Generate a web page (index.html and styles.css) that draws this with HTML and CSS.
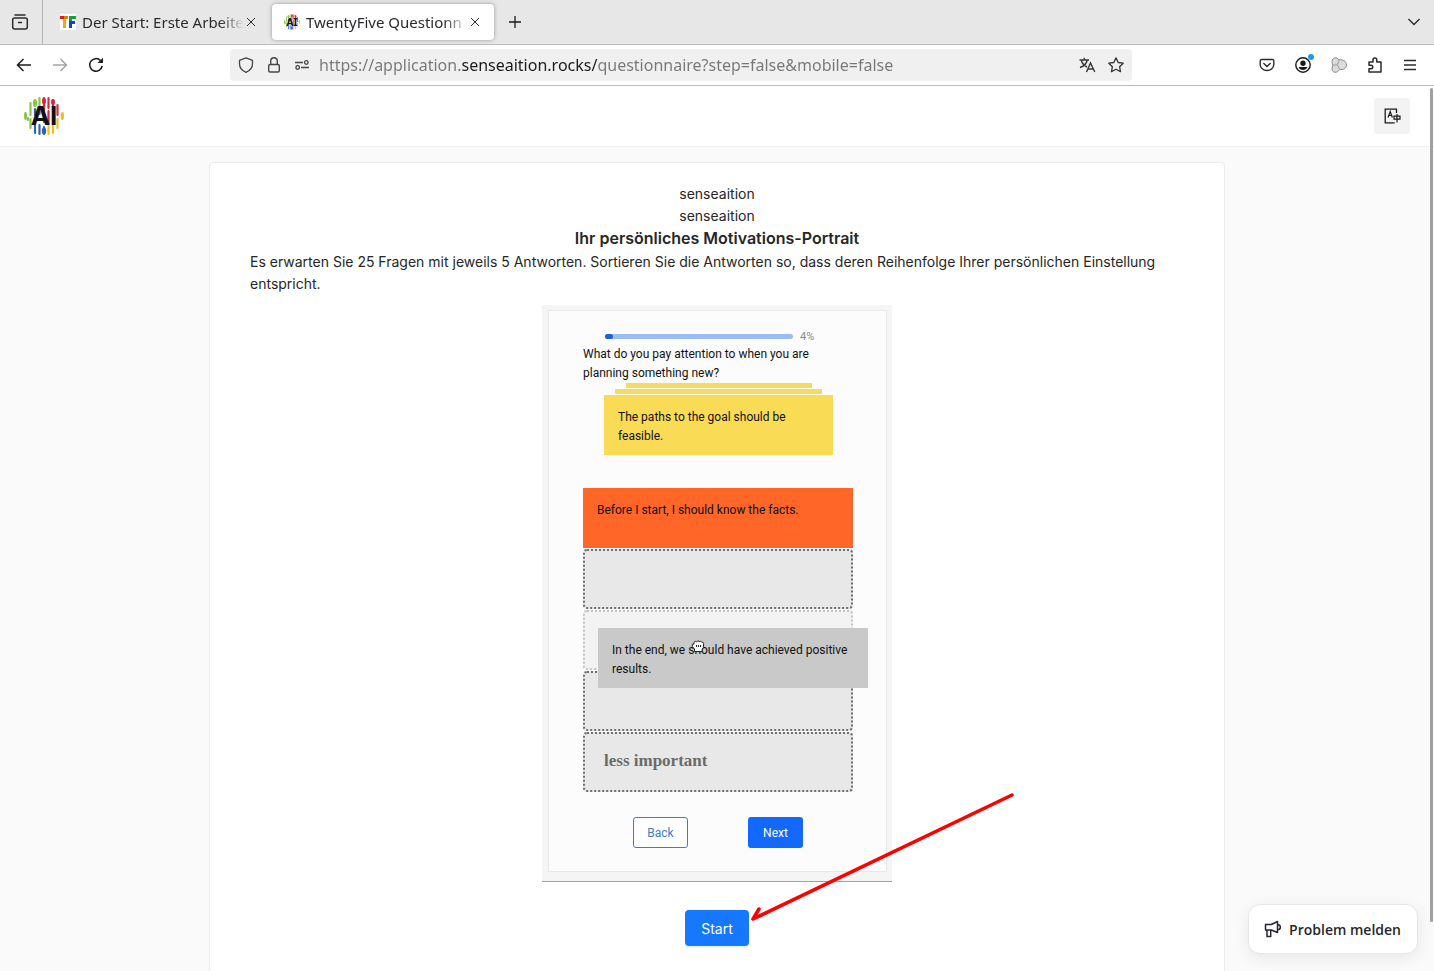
FILE: index.html
```html
<!DOCTYPE html>
<html lang="de">
<head>
<meta charset="UTF-8">
<meta name="viewport" content="width=device-width, initial-scale=1">
<title>TwentyFive Questionnaire</title>
<link rel="stylesheet" href="styles.css">
</head>
<body>

<svg class="defs" width="0" height="0" aria-hidden="true">
  <symbol id="logo" viewBox="0 0 40 40">
    <g fill="none" stroke-width="2.200" stroke-linecap="round">
      <path stroke="#8bc34a" d="M1.500 17v6M6.500 7v12M11 4v6M15.500 2v8M6.500 23v9M4 22v2"/>
      <path stroke="#d6293a" d="M20 2v13M24.500 2v10M29 4v11M24.500 15v13M33.500 9v10"/>
      <path stroke="#2f62b5" d="M11 13v6M11 29v8M15.500 29v9M20 31v7M15.500 12v6M20 18v8"/>
      <path stroke="#f0bd26" d="M24.500 30v8M29 29v8M33.500 23v9M38.500 17v6"/>
    </g>
    <g>
      <ellipse cx="1.500" cy="20" rx="1.500" ry="3" fill="#8bc34a"/>
      <ellipse cx="11" cy="7" rx="2.200" ry="3.500" fill="#8bc34a"/>
      <ellipse cx="20" cy="5" rx="2" ry="3.500" fill="#d6293a"/>
      <ellipse cx="29" cy="6" rx="2" ry="3" fill="#d6293a"/>
      <ellipse cx="20" cy="35" rx="2.200" ry="3.500" fill="#2f62b5"/>
      <ellipse cx="38.300" cy="20" rx="1.700" ry="3.500" fill="#f0bd26"/>
    </g>
  </symbol>
</svg>

<div class="tabbar">
  <button class="recent" aria-label="Letzte Tabs">
    <svg width="18" height="18" viewBox="0 0 18 18" fill="none" stroke="#2b2b2f" stroke-width="1.500" stroke-linecap="round"><path d="M4 2h10"/><rect x="1.700" y="5" width="14.600" height="11" rx="2"/><path d="M7.500 9.500h3"/></svg>
  </button>
  <div class="tab">
    <svg class="favicon" width="16" height="16" viewBox="0 0 16 16"><path fill="#fff" d="M0 0h16v16H0z"/><path fill="#d81e1e" d="M0 2h4v3H0z"/><path fill="#e07a10" d="M4 2h4v3H4z"/><path fill="#e8b000" d="M3 5h3v9H3z"/><path fill="#14a03c" d="M9 2h7v3h-4v3H9z"/><path fill="#1d3fd0" d="M9 7h6v3h-3v4H9z"/></svg>
    <a class="tab-title" href="#">Der Start: Erste Arbeite</a>
    <button class="close" aria-label="Tab schließen"><svg width="10" height="10" viewBox="0 0 10 10" stroke="#2b2b2f"><path d="M1 1l8 8M9 1L1 9"/></svg></button>
  </div>
  <div class="tab active">
    <span class="favicon logo-small"><svg width="16" height="16"><use href="#logo"/></svg><b>AI</b></span>
    <a class="tab-title" href="#">TwentyFive Questionn</a>
    <button class="close" aria-label="Tab schließen"><svg width="10" height="10" viewBox="0 0 10 10" stroke="#2b2b2f"><path d="M1 1l8 8M9 1L1 9"/></svg></button>
  </div>
  <button class="new-tab" aria-label="Neuer Tab"><svg width="12" height="12" viewBox="0 0 12 12" stroke="#1b1b1f" stroke-width="1.300"><path d="M6 0v12M0 6h12"/></svg></button>
  <button class="all-tabs" aria-label="Alle Tabs"><svg width="12" height="8" viewBox="0 0 12 8" fill="none" stroke="#2b2b2f" stroke-width="1.400"><path d="M.5 1L6 6.500 11.500 1"/></svg></button>
</div>

<div class="navbar">
  <div class="nav-buttons">
    <button aria-label="Zurück"><svg width="16" height="16" viewBox="0 0 16 16" fill="none" stroke="#1b1b1f" stroke-width="1.500"><path d="M15 8H2M7.500 2L1.500 8l6 6"/></svg></button>
    <button aria-label="Vor"><svg width="16" height="16" viewBox="0 0 16 16" fill="none" stroke="#a5a5a8" stroke-width="1.500"><path d="M1 8h13M8.500 2l6 6-6 6"/></svg></button>
    <button aria-label="Neu laden"><svg width="16" height="16" viewBox="0 0 16 16"><path d="M14.200 9A6.300 6.300 0 1 1 12.500 3.500" fill="none" stroke="#1b1b1f" stroke-width="1.500"/><path d="M15 .8V6H9.500z" fill="#1b1b1f"/></svg></button>
  </div>
  <div class="urlbar">
    <svg width="16" height="16" viewBox="0 0 16 16" fill="none" stroke="#45454a" stroke-width="1.300" stroke-linejoin="round"><path d="M8 .8l6.500 2.500v3.500c0 4-2.700 7-6.500 8.500C4.200 13.800 1.500 10.800 1.500 6.800V3.300z"/></svg>
    <svg width="16" height="16" viewBox="0 0 16 16" fill="none" stroke="#45454a" stroke-width="1.400"><rect x="2.700" y="7.500" width="10.600" height="7.500" rx="1.500"/><path d="M4.700 7.500V4a3.300 3.300 0 0 1 6.600 0v3.500"/></svg>
    <svg width="16" height="16" viewBox="0 0 16 16" fill="none" stroke="#45454a" stroke-width="1.300"><path d="M1 5.500h8M7 10.500h8"/><circle cx="12.300" cy="5.500" r="1.800"/><circle cx="3.700" cy="10.500" r="1.800"/></svg>
    <input class="url" type="text" aria-label="Adresse" value="https://application.senseaition.rocks/questionnaire?step=false&amp;mobile=false">
    <button aria-label="Seite übersetzen"><svg width="17" height="16" viewBox="0 0 17 16" fill="none" stroke="#35353a" stroke-width="1.400"><path d="M.5 3h9.500M5.200.8V3M8.300 3C7.500 6.500 4.500 9.300 1 10.500M2.300 3c.6 3 3 5.700 5.700 7M7.500 15l4-9 4.300 9M9 12h5.500"/></svg></button>
    <button aria-label="Lesezeichen"><svg width="16" height="16" viewBox="0 0 16 16" fill="none" stroke="#35353a" stroke-width="1.300" stroke-linejoin="round"><path d="M8 .9l2.200 4.600 5 .7-3.600 3.500.9 5L8 12.300l-4.500 2.400.9-5L.8 6.200l5-.7z"/></svg></button>
  </div>
  <div class="nav-tools">
    <button aria-label="Pocket"><svg width="16" height="16" viewBox="0 0 16 16" fill="none" stroke="#2b2b2f" stroke-width="1.400" stroke-linecap="round"><path d="M2.500 2.500h11a1.300 1.300 0 0 1 1.300 1.300V7.500a6.800 6 0 0 1-13.600 0V3.800a1.300 1.300 0 0 1 1.300-1.300zM4.800 6.500L8 9.500l3.200-3"/></svg></button>
    <button class="account" aria-label="Konto"><svg width="16" height="16" viewBox="0 0 16 16"><circle cx="8" cy="8" r="7.200" fill="none" stroke="#1b1b1f" stroke-width="1.400"/><circle cx="8" cy="6.200" r="2.700" fill="#1b1b1f"/><path fill="#1b1b1f" d="M3.500 10h9c-.8 2-2.400 3-4.500 3s-3.700-1-4.500-3z"/></svg><span class="dot"></span></button>
    <button aria-label="Erweiterung"><svg width="16" height="16" viewBox="0 0 16 16" fill="#dcdcdc" stroke="#8a8a8a"><path d="M1 4.500C1 .5 6-.5 8 3c4-1 7.500 1.500 7.500 5S12 13 8.500 12.500C6.500 16.500 1 16 1 12c0-1.500.5-2.500.5-3.700S1 6 1 4.500z"/><path fill="none" stroke="#a5a5a5" stroke-width=".8" d="M8 3C6 6 6.500 9.500 8.500 12.500M1.500 8.300c3-2 6-1 7 4.200M1.500 8.300C4 9.500 8 8 8 3"/></svg></button>
    <button aria-label="Add-ons"><svg width="16" height="16" viewBox="0 0 16 16" fill="none" stroke="#2b2b2f" stroke-width="1.500" stroke-linejoin="round"><path d="M2 5h4V3a1.900 1.900 0 0 1 3.800 0v2H14v10H2v-3.200h2a1.700 1.700 0 0 0 0-3.500H2z"/></svg></button>
    <button aria-label="Menü"><svg width="14" height="12" viewBox="0 0 14 12" stroke="#2b2b2f" stroke-width="1.400"><path d="M1 1.500h12M1 6h12M1 10.500h12"/></svg></button>
  </div>
</div>

<div class="viewport">
  <header class="app-header">
    <a class="logo" href="#" aria-label="senseaition"><svg width="40" height="40"><use href="#logo"/></svg><b>AI</b></a>
    <button class="lang" aria-label="Sprache"><svg width="18" height="18" viewBox="0 0 18 18" fill="none" stroke="#1b1b1f" stroke-width="1.300"><path d="M13.500 6V2.200H2.200v13.600h9.500"/><path d="M5 10.500l2.200-6 2.200 6M5.800 8.500h2.800" stroke-width="1.200"/><path d="M11 9.200h6v3h-6zM14 7v8.500" stroke-width="1.200"/></svg></button>
  </header>

  <main class="card">
    <p>senseaition</p>
    <p>senseaition</p>
    <h1>Ihr persönliches Motivations-Portrait</h1>
    <p class="intro">Es erwarten Sie 25 Fragen mit jeweils 5 Antworten. Sortieren Sie die Antworten so, dass deren Reihenfolge Ihrer persönlichen Einstellung entspricht.</p>

    <div class="demo">
      <div class="demo-inner">
        <div class="progress">
          <div class="bar"><div class="bar-fill" style="width: 4%"></div></div>
          <span>4%</span>
        </div>
        <p class="question">What do you pay attention to when you are planning something new?</p>
        <div class="stack">
          <div class="stack-edge far"></div>
          <div class="stack-edge"></div>
          <div class="answer yellow">The paths to the goal should be feasible.</div>
        </div>
        <div class="slots">
          <div class="answer orange">Before I start, I should know the facts.</div>
          <div class="slot"></div>
          <div class="slot faded"></div>
          <div class="slot"></div>
          <div class="slot last">less important</div>
          <div class="answer dragged">In the end, we should have achieved positive results.
            <svg class="hand" width="14" height="14" viewBox="0 0 14 14" fill="#fff" stroke="#222" stroke-linejoin="round"><path d="M3.500 12.500V10L1.300 7.500V5.300L3 5V3.300l1.500-1 1 .7 1.300-1.300 1.400.9 1.500-.4 1 1 1.400.2.600 1.300-.4 3.800-1.200 2v2z"/><path d="M5.500 6v2M7.500 6v2M9.500 6v2"/></svg>
          </div>
        </div>
        <div class="demo-buttons">
          <button class="btn-outline">Back</button>
          <button class="btn-next">Next</button>
        </div>
      </div>
    </div>

    <div class="start-wrap">
      <button class="btn-start">Start</button>
      <svg class="arrow" width="266" height="130" viewBox="0 0 266 130" fill="none" stroke="#f00" stroke-width="3.500" stroke-linecap="round" stroke-linejoin="round"><path d="M263 3L4 127M4 127L10 117M4 127l9-4"/></svg>
    </div>
  </main>

  <button class="report"><svg width="18" height="18" viewBox="0 0 18 18" fill="none" stroke="#26262e" stroke-width="1.500" stroke-linejoin="round"><path d="M1.500 4.500h5.800L13.500 1.500v11L7.300 10H1.500zM3 10h3.700v6.500H3zM13.500 4.500c3.800.3 3.800 5 0 5.300"/></svg>Problem melden</button>
  <div class="scrollbar"></div>
</div>

</body>
</html>
```
FILE: styles.css
```css
* {
  box-sizing: border-box;
}

body {
  margin: 0;
  height: 100vh;
  display: flex;
  flex-direction: column;
  overflow: hidden;
  font-family: Inter, "Liberation Sans", sans-serif;
  font-size: 14px;
  line-height: 22px;
  color: #262626;
  background: #fafafa;
}

button {
  padding: 0;
  border: none;
  background: none;
  font-family: inherit;
  cursor: pointer;
}

svg {
  display: block;
  flex: none;
}

p, h1 {
  margin: 0;
}

.defs {
  position: absolute;
}

/* browser tabs */
.tabbar {
  flex: none;
  display: flex;
  align-items: center;
  height: 45px;
  padding-right: 14px;
  background: #e7e7e7;
  border-bottom: 1px solid #bdbdbd;
  font-family: "Noto Sans", sans-serif;
}

.recent {
  display: flex;
  align-items: center;
  justify-content: center;
  width: 43px;
  height: 44px;
  padding-right: 2px;
  margin-right: 5px;
  border-right: 1px solid #b5b5b5;
}

.tab {
  display: flex;
  align-items: center;
  width: 222px;
  height: 36px;
  padding: 0 10px 0 12px;
  border-radius: 4px;
}

.tab.active {
  margin-left: 2px;
  background: #fff;
  box-shadow: 0 0 4px rgba(0, 0, 0, 0.35);
}

.favicon {
  margin-right: 6px;
}

.tab-title {
  flex: 1;
  overflow: hidden;
  white-space: nowrap;
  font-size: 15px;
  color: #2b2b2f;
  text-decoration: none;
  -webkit-mask-image: linear-gradient(to left, transparent, #000 24px);
  mask-image: linear-gradient(to left, transparent, #000 24px);
}

.close {
  margin: 0 4px 0 2px;
}

.new-tab {
  margin-left: 15px;
}

.all-tabs {
  margin-left: auto;
}

/* address bar */
.navbar {
  flex: none;
  display: grid;
  grid-template-columns: 1fr 902px 1fr;
  align-items: center;
  height: 41px;
  background: #fff;
  border-bottom: 1px solid #bdbdbd;
}

.nav-buttons {
  display: flex;
  gap: 20px;
  padding-left: 16px;
}

.urlbar {
  display: flex;
  align-items: center;
  gap: 12px;
  height: 32px;
  margin-left: -36px;
  margin-right: 36px;
  padding: 0 8px;
  border-radius: 4px;
  background: #f0f0f0;
}

/* the host part of the address is darker than the rest */
.url {
  flex: 1;
  min-width: 0;
  margin-left: -3px;
  padding: 0;
  border: none;
  outline: none;
  font-family: "Noto Sans", sans-serif;
  font-size: 16px;
  color: #77777a;
  background: linear-gradient(to right, #77777a 143px, #1b1b1f 143px, #1b1b1f 279px, #77777a 279px);
  -webkit-background-clip: text;
  background-clip: text;
  -webkit-text-fill-color: transparent;
}

.nav-tools {
  display: flex;
  align-items: center;
  justify-content: flex-end;
  gap: 20px;
  padding-right: 17px;
}

.account {
  position: relative;
}

.dot {
  position: absolute;
  top: -3px;
  right: -3px;
  width: 6px;
  height: 6px;
  border-radius: 50%;
  background: #1a9cf0;
}

/* page */
.viewport {
  flex: 1;
  min-height: 0;
  position: relative;
  overflow: hidden;
}

.app-header {
  display: flex;
  align-items: center;
  justify-content: space-between;
  height: 61px;
  padding: 0 24px;
  background: #fff;
  border-bottom: 1px solid #f0f0f0;
}

.logo, .logo-small {
  position: relative;
  color: #111;
}

.logo b, .logo-small b {
  position: absolute;
  inset: 0;
  font-size: 26px;
  font-weight: 700;
  line-height: 40px;
  text-align: center;
}

.logo-small b {
  font-size: 10px;
  line-height: 16px;
}

.lang {
  display: flex;
  align-items: center;
  justify-content: center;
  width: 36px;
  height: 36px;
  border-radius: 4px;
  background: #f3f3f3;
}

.card {
  display: flex;
  flex-direction: column;
  align-items: center;
  max-width: 1016px;
  margin: 15px auto 0;
  padding: 20px 40px 40px;
  background: #fff;
  border: 1px solid #ebebeb;
  border-radius: 4px;
}

h1 {
  margin-bottom: 2px;
  font-size: 16px;
  font-weight: 600;
  line-height: 22px;
}

.intro {
  align-self: stretch;
}

/* demo of the sorting task */
.demo {
  width: 350px;
  margin-top: 10px;
  padding: 5px 5px 9px 6px;
  background: #f5f5f5;
  border-bottom: 1px solid #a0a0a0;
  font-family: Roboto, "Liberation Sans", sans-serif;
  font-size: 12px;
  line-height: 19px;
  color: #111;
}

.demo-inner {
  padding: 17px 33px 23px 34px;
  background: #fcfcfc;
  border: 1px solid #e8e8e8;
}

.progress {
  display: flex;
  align-items: center;
  gap: 7px;
  padding-left: 22px;
  font-size: 11px;
  line-height: 17px;
  color: #888;
}

.bar {
  width: 188px;
  height: 5px;
  border-radius: 3px;
  background: #98bdf7;
}

.bar-fill {
  height: 5px;
  border-radius: 3px;
  background: #1c5fe0;
}

.stack {
  display: flex;
  flex-direction: column;
  align-items: center;
  gap: 1px;
  margin: 0 20px 33px 21px;
}

.stack-edge {
  width: 207px;
  height: 5px;
  background: #f4db62;
}

.stack-edge.far {
  width: 186px;
}

.answer {
  width: 100%;
  height: 60px;
  padding: 13px 8px 13px 14px;
  color: #111;
}

.yellow {
  background: #fadb55;
}

.orange {
  background: #ff6628;
}

.slots {
  position: relative;
  display: flex;
  flex-direction: column;
  gap: 1px;
}

.slot {
  height: 60px;
  border: 2px dotted #707070;
  border-radius: 4px;
  background: #e8e8e8;
}

.slot.faded {
  border-color: #c4c4c4;
  background: #f3f3f3;
}

.slot.last {
  padding: 17px 19px;
  font-family: "Liberation Serif", serif;
  font-size: 17px;
  font-weight: 700;
  color: #6b6b6b;
}

.dragged {
  position: absolute;
  left: 15px;
  top: 140px;
  background: #c9c9c9;
}

.hand {
  position: absolute;
  left: 93px;
  top: 11px;
}

.demo-buttons {
  display: flex;
  justify-content: center;
  gap: 60px;
  margin-top: 25px;
}

.demo-buttons button {
  width: 55px;
  height: 31px;
  border-radius: 3px;
  font-size: 12px;
}

.btn-outline {
  border: 1px solid #3d7cc9;
  background: #fff;
  color: #3d7cc9;
}

.demo-buttons .btn-next {
  background: #1268ff;
  color: #fff;
}

.start-wrap {
  position: relative;
  margin-top: 28px;
}

.btn-start {
  display: block;
  width: 64px;
  height: 36px;
  border-radius: 4px;
  background: #1677ff;
  box-shadow: 0 2px 0 rgba(5, 145, 255, 0.1);
  color: #fff;
  font-size: 14px;
}

.arrow {
  position: absolute;
  left: 100%;
  bottom: 24px;
}

.report {
  position: absolute;
  right: 16px;
  bottom: 17px;
  display: flex;
  align-items: center;
  gap: 7px;
  height: 50px;
  padding: 0 16px 0 15px;
  border: 1px solid #e6e6e6;
  border-radius: 12px;
  background: #fff;
  box-shadow: 0 4px 16px rgba(0, 0, 0, 0.08);
  font-family: "Open Sans", sans-serif;
  font-size: 14px;
  font-weight: 600;
  color: #26262e;
}

.scrollbar {
  position: absolute;
  right: 1px;
  top: 2px;
  width: 3px;
  height: 834px;
  border-radius: 2px;
  background: #a0a0a0;
}
```
